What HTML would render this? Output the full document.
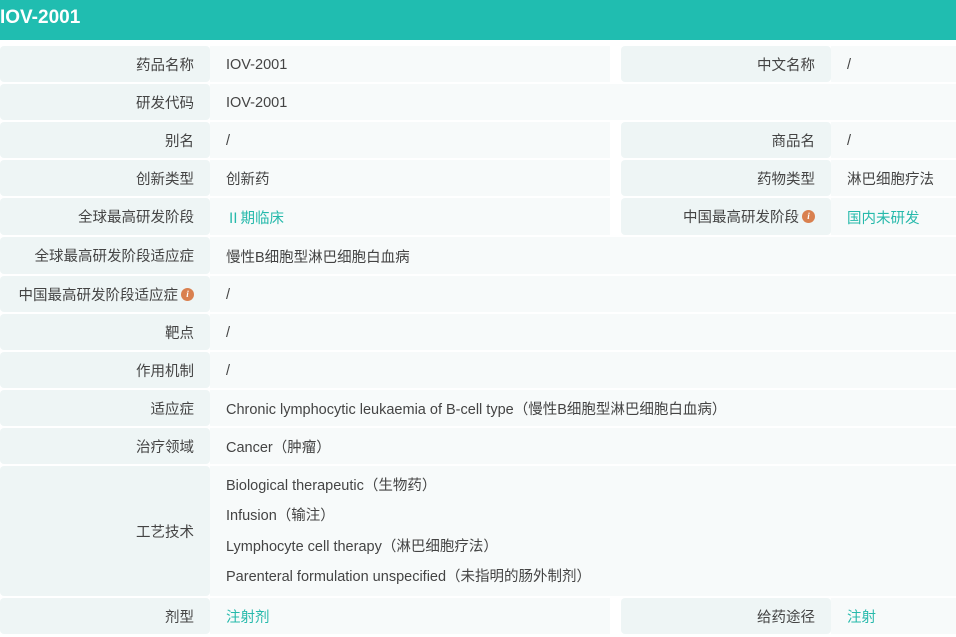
<!DOCTYPE html>
<html><head><meta charset="utf-8"><style>
*{margin:0;padding:0;box-sizing:border-box}
body{width:956px;height:637px;background:#fff;font-family:"Liberation Sans","Noto Sans CJK SC",sans-serif;font-size:14.5px;color:#444;position:relative;overflow:hidden}
.hd{position:absolute;left:0;top:0;width:956px;height:40px;background:#20bdb0;color:#fff;font-weight:bold;font-size:19px;line-height:35px;padding-left:0}
.c{position:absolute;display:flex;align-items:center}
.l{background:#eef5f5;justify-content:flex-end;padding-right:16px;border-radius:4px}
.v{background:#f7fafa;padding-left:16px;padding-top:1px}
.t{color:#26b9ab}
.i{display:inline-block;width:13px;height:13px;border-radius:50%;background:#d9804f;color:#fff;font-size:9px;font-style:italic;font-weight:bold;text-align:center;line-height:13px;margin-left:3px;font-family:"Liberation Serif",serif}
.m{flex-direction:column;align-items:flex-start;justify-content:center}
.m div{height:30.5px;line-height:30.5px}
</style></head><body>
<div class="hd">IOV-2001</div>

<div class="c l" style="left:0;top:46px;width:210px;height:36px">药品名称</div>
<div class="c v" style="left:210px;top:46px;width:400px;height:36px">IOV-2001</div>
<div class="c l" style="left:621px;top:46px;width:210px;height:36px">中文名称</div>
<div class="c v" style="left:831px;top:46px;width:125px;height:36px">/</div>

<div class="c l" style="left:0;top:84px;width:210px;height:36px">研发代码</div>
<div class="c v" style="left:210px;top:84px;width:746px;height:36px">IOV-2001</div>

<div class="c l" style="left:0;top:122px;width:210px;height:36px">别名</div>
<div class="c v" style="left:210px;top:122px;width:400px;height:36px">/</div>
<div class="c l" style="left:621px;top:122px;width:210px;height:36px">商品名</div>
<div class="c v" style="left:831px;top:122px;width:125px;height:36px">/</div>

<div class="c l" style="left:0;top:160px;width:210px;height:36px">创新类型</div>
<div class="c v" style="left:210px;top:160px;width:400px;height:36px">创新药</div>
<div class="c l" style="left:621px;top:160px;width:210px;height:36px">药物类型</div>
<div class="c v" style="left:831px;top:160px;width:125px;height:36px">淋巴细胞疗法</div>

<div class="c l" style="left:0;top:198px;width:210px;height:37px">全球最高研发阶段</div>
<div class="c v t" style="left:210px;top:198px;width:400px;height:37px">Ⅱ期临床</div>
<div class="c l" style="left:621px;top:198px;width:210px;height:37px">中国最高研发阶段<span class="i">i</span></div>
<div class="c v t" style="left:831px;top:198px;width:125px;height:37px">国内未研发</div>

<div class="c l" style="left:0;top:237px;width:210px;height:37px">全球最高研发阶段适应症</div>
<div class="c v" style="left:210px;top:237px;width:746px;height:37px">慢性B细胞型淋巴细胞白血病</div>

<div class="c l" style="left:0;top:276px;width:210px;height:36px">中国最高研发阶段适应症<span class="i">i</span></div>
<div class="c v" style="left:210px;top:276px;width:746px;height:36px">/</div>

<div class="c l" style="left:0;top:314px;width:210px;height:36px">靶点</div>
<div class="c v" style="left:210px;top:314px;width:746px;height:36px">/</div>

<div class="c l" style="left:0;top:352px;width:210px;height:36px">作用机制</div>
<div class="c v" style="left:210px;top:352px;width:746px;height:36px">/</div>

<div class="c l" style="left:0;top:390px;width:210px;height:36px">适应症</div>
<div class="c v" style="left:210px;top:390px;width:746px;height:36px">Chronic lymphocytic leukaemia of B-cell type（慢性B细胞型淋巴细胞白血病）</div>

<div class="c l" style="left:0;top:428px;width:210px;height:36px">治疗领域</div>
<div class="c v" style="left:210px;top:428px;width:746px;height:36px">Cancer（肿瘤）</div>

<div class="c l" style="left:0;top:466px;width:210px;height:130px">工艺技术</div>
<div class="c v m" style="left:210px;top:466px;width:746px;height:130px">
<div>Biological therapeutic（生物药）</div>
<div>Infusion（输注）</div>
<div>Lymphocyte cell therapy（淋巴细胞疗法）</div>
<div>Parenteral formulation unspecified（未指明的肠外制剂）</div>
</div>

<div class="c l" style="left:0;top:598px;width:210px;height:36px">剂型</div>
<div class="c v t" style="left:210px;top:598px;width:400px;height:36px">注射剂</div>
<div class="c l" style="left:621px;top:598px;width:210px;height:36px">给药途径</div>
<div class="c v t" style="left:831px;top:598px;width:125px;height:36px">注射</div>
</body></html>
